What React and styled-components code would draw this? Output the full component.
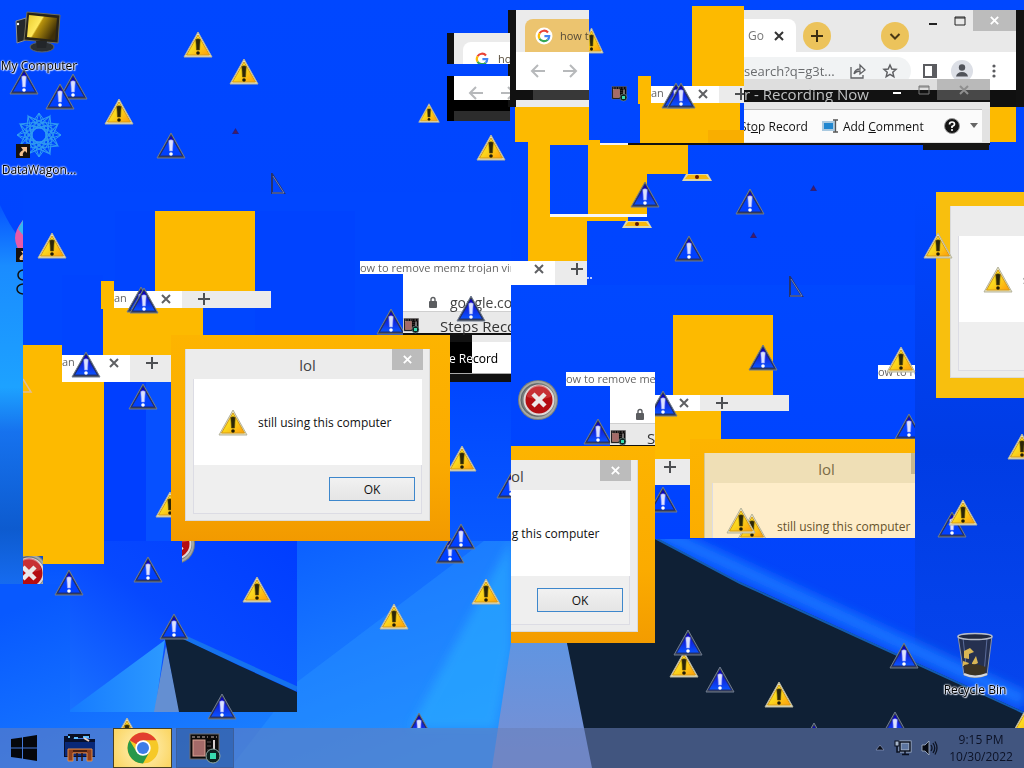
import React from "react";
import styled, { createGlobalStyle, css } from "styled-components";

const GlobalStyle = createGlobalStyle`
  * { box-sizing: border-box; }
  body { margin: 0; font-family: "Open Sans", "Noto Sans", sans-serif; font-size: 12px; color: #111; }
  button, input { font: inherit; color: inherit; border: 0; padding: 0; margin: 0; background: none; }
  svg { display: block; flex: none; }
`;

const ORANGE = "#fdba00";
const BLUE = "#0045ff";

/* ---------- layout ---------- */

const Desktop = styled.main`
  position: relative;
  display: flex;
  flex-direction: column;
  min-height: 100vh;
  overflow: hidden;
  background: ${BLUE};
`;

const WallpaperArt = styled.svg`
  position: absolute;
  inset: 0;
  width: 100%;
  height: 100%;
`;

const Canvas = styled.div`
  position: relative;
  flex: 1;
  min-height: 728px;
  overflow: hidden;
`;

const Patch = styled.div`
  position: absolute;
  left: ${(p) => p.$x}px;
  top: ${(p) => p.$y}px;
  width: ${(p) => p.$w}px;
  height: ${(p) => p.$h}px;
  background: ${(p) => p.$bg || "transparent"};
  overflow: hidden;
`;

const Spot = styled.div`
  position: absolute;
  left: ${(p) => p.$x}px;
  top: ${(p) => p.$y}px;
`;

/* ---------- wallpaper ---------- */

function Wallpaper() {
  return (
    <WallpaperArt viewBox="0 0 1024 768" preserveAspectRatio="xMidYMid slice" aria-hidden="true">
      <defs>
        <linearGradient id="sky" x1="0" y1="0" x2="0" y2="1">
          <stop offset="0" stopColor="#0047ff" />
          <stop offset=".6" stopColor="#0043ff" />
          <stop offset="1" stopColor="#0748f0" />
        </linearGradient>
        <linearGradient id="beam" gradientUnits="userSpaceOnUse" x1="300" y1="500" x2="400" y2="760">
          <stop offset="0" stopColor="#0859ff" />
          <stop offset=".5" stopColor="#1573ff" />
          <stop offset="1" stopColor="#1f8aff" />
        </linearGradient>
        <linearGradient id="edge" gradientUnits="userSpaceOnUse" x1="0" y1="205" x2="0" y2="610">
          <stop offset="0" stopColor="#0655ff" />
          <stop offset=".15" stopColor="#1a8cff" />
          <stop offset=".45" stopColor="#1da2ff" />
          <stop offset=".56" stopColor="#1672ee" />
          <stop offset=".8" stopColor="#0d5bcf" />
          <stop offset="1" stopColor="#1a73ff" />
        </linearGradient>
        <linearGradient id="haze" x1="0" y1="0" x2="0" y2="1">
          <stop offset="0" stopColor="#3f9cf5" />
          <stop offset="1" stopColor="#7a8fd2" />
        </linearGradient>
        <linearGradient id="right" x1="0" y1="0" x2="0" y2="1">
          <stop offset="0" stopColor="#0045ff" />
          <stop offset=".45" stopColor="#003ce4" />
          <stop offset="1" stopColor="#0848f0" />
        </linearGradient>
        <filter id="soft" x="-20%" y="-20%" width="140%" height="140%">
          <feGaussianBlur stdDeviation="5" />
        </filter>
      </defs>
      <rect width="1024" height="768" fill="url(#sky)" />
      <rect x="915" y="200" width="109" height="560" fill="url(#right)" />
      <path d="M0 205Q14 235 23 240V600H0Z" fill="url(#edge)" />
      <path d="M0 584H70V541H297L450 500L538 483V768H0Z" fill="url(#beam)" />
      <path d="M538 500L297 682L230 768H492L538 560Z" fill="#2a96ff" opacity=".4" />
      <path d="M511 540L511 650L495 728L410 728Z" fill="#2bb0ff" opacity=".55" filter="url(#soft)" />
      <path d="M538 483L511 643L492 768H600L567 643Z" fill="url(#haze)" />
      <path d="M538 483L655 530L1024 700" stroke="#1270ff" strokeWidth="16" fill="none" filter="url(#soft)" />
      <path d="M538 483L655 537L740 582L860 637L1024 712V768H592L567 643Z" fill="#0f2035" />
      <path d="M655 538L740 583L860 638L1024 713" stroke="#1675e8" strokeWidth="2" fill="none" opacity=".7" />
    </WallpaperArt>
  );
}

function MiniWallpaper() {
  return (
    <svg width="227" height="171" viewBox="0 0 227 171" aria-hidden="true">
      <defs>
        <linearGradient id="miniSky" x1="0" y1="1" x2="1" y2="0">
          <stop offset="0" stopColor="#1a72ff" />
          <stop offset=".5" stopColor="#0749ff" />
          <stop offset="1" stopColor="#003dff" />
        </linearGradient>
        <linearGradient id="miniBeam" x1="0" y1="0" x2="1" y2="0">
          <stop offset="0" stopColor="#167bff" />
          <stop offset="1" stopColor="#2c99ff" />
        </linearGradient>
      </defs>
      <rect width="227" height="171" fill="url(#miniSky)" />
      <path d="M95 99L0 169V171H85Z" fill="url(#miniBeam)" />
      <path d="M96 105L84 171H110Z" fill="#648fd2" />
      <path d="M113 96L227 148" stroke="#1572ee" strokeWidth="5" />
      <path d="M95 98L113 98L170 125L227 151V171H109Z" fill="#0f2238" />
    </svg>
  );
}

/* ---------- icons ---------- */

function WarningIcon({ kind = "yellow", width = 30, height = 27 }) {
  const yellow = kind === "yellow";
  const glass = kind === "blue";
  return (
    <svg width={width} height={height} viewBox="0 0 30 27" preserveAspectRatio="none" aria-hidden="true">
      <defs>
        <linearGradient id="warnFill" x1="0" y1="0" x2="1" y2="1">
          <stop offset="0" stopColor="#fff22a" />
          <stop offset=".5" stopColor="#fbd51c" />
          <stop offset="1" stopColor="#ff9c08" />
        </linearGradient>
        <linearGradient id="warnBlue" x1="0" y1="0" x2="0" y2="1">
          <stop offset="0" stopColor="#0a00c8" />
          <stop offset=".5" stopColor="#1028e0" />
          <stop offset="1" stopColor="#0a55ff" />
        </linearGradient>
      </defs>
      <path
        d="M15 1L29 26H1Z"
        fill={yellow ? "#e8e2bc" : "#3c424c"}
        stroke={yellow ? "#b5b39c" : "#6f7b90"}
        strokeWidth="1"
        strokeLinejoin="round"
      />
      <path
        d="M15 4L26.500 24H3.500Z"
        fill={yellow ? "url(#warnFill)" : glass ? "url(#warnBlue)" : "#0040ff"}
        stroke={yellow ? "#d59a18" : "#1c2c78"}
        strokeWidth="1"
      />
      {!yellow && <path d="M15 4L18 9.500H12Z" fill="#0a00c0" />}
      <path d="M12.800 8.500Q15 7 17.200 8.500L16.500 19H13.500Z" fill={yellow ? "#2b2608" : "#dce2ff"} stroke={yellow ? "#5a4c0a" : "#8f9aff"} strokeWidth=".6" />
      <circle cx="15" cy="22" r="1.800" fill={yellow ? "#201c08" : "#fff"} />
    </svg>
  );
}

function ErrorIcon() {
  return (
    <svg width="42" height="42" viewBox="0 0 42 42" aria-hidden="true">
      <circle cx="21" cy="21" r="20" fill="#777d7d" />
      <circle cx="21" cy="21" r="18" fill="none" stroke="#a6a9a4" strokeWidth="2" />
      <circle cx="20" cy="21" r="16" fill="none" stroke="#5c6268" strokeWidth="1" />
      <circle cx="22" cy="21" r="14.500" fill="#b40d12" stroke="#ded8d8" strokeWidth="2" />
      <path d="M10 18A12 12 0 0 1 34 18Q22 22 10 18Z" fill="#d4474c" opacity=".6" />
      <path d="M16 15L28 27M28 15L16 27" stroke="#ece9e9" strokeWidth="4.500" />
    </svg>
  );
}

function Glyph({ d, size = 12, color = "#4d4f52", weight = 2, fill = "none" }) {
  return (
    <svg width={size} height={size} viewBox="0 0 12 12" aria-hidden="true">
      <path d={d} fill={fill} stroke={color} strokeWidth={weight} />
    </svg>
  );
}
const CROSS = "M2 2L10 10M10 2L2 10";
const PLUS = "M6 0V12M0 6H12";

function GoogleIcon() {
  return (
    <svg width="20" height="20" viewBox="0 0 20 20" aria-hidden="true">
      <circle cx="10" cy="10" r="8.500" fill="#fff" />
      <g fill="none" strokeWidth="2.200">
        <path d="M14 6.500A5.200 5.200 0 0 0 5.600 7.300" stroke="#ea4335" />
        <path d="M5.600 7.300A5.200 5.200 0 0 0 5.600 12.700" stroke="#fbbc05" />
        <path d="M5.600 12.700A5.200 5.200 0 0 0 13.700 13.700" stroke="#34a853" />
        <path d="M13.700 13.700A5.200 5.200 0 0 0 15.200 10.200H10.400" stroke="#4285f4" />
      </g>
    </svg>
  );
}

function RecorderIcon({ size = 17 }) {
  return (
    <svg width={size} height={size} viewBox="0 0 34 34" aria-hidden="true">
      <rect x="2" y="3" width="29" height="25" fill="#0c0a0a" stroke="#6f6a6c" />
      <path d="M4 6H20M23 6H29" stroke="#cbb7b4" strokeWidth="1.200" strokeDasharray="3 2" />
      <rect x="5" y="9" width="12" height="16" fill="#a56a68" stroke="#dba394" />
      <path d="M19 11H23M19 15H23M19 19H22" stroke="#5c5352" />
      <path d="M26 9V18" stroke="#d8cfcf" strokeWidth="2" />
      <circle cx="25" cy="25" r="7" fill="#0e2320" stroke="#8fa7a3" />
      <rect x="22" y="22" width="6" height="6" fill="#38dcae" />
    </svg>
  );
}

function Lock() {
  return (
    <svg width="10" height="13" viewBox="0 0 10 13" aria-hidden="true">
      <rect x="1" y="5" width="8" height="7" rx="1" fill="#5b5d60" />
      <path d="M3 6V3.500A2 2 0 0 1 7 3.500V6" fill="none" stroke="#5b5d60" strokeWidth="1.400" />
    </svg>
  );
}

function Arrow({ back }) {
  return (
    <svg width="16" height="16" viewBox="0 0 16 16" aria-hidden="true">
      <path d={back ? "M15 8H2M8 2L2 8L8 14" : "M1 8H14M8 2L14 8L8 14"} fill="none" stroke="#b7b9bb" strokeWidth="2" />
    </svg>
  );
}

/* ---------- message box ---------- */

const Frame = styled.section`
  width: 279px;
  height: 206px;
  padding: 14px 20px 20px 14px;
  background: ${(p) => p.$frame || "linear-gradient(#fdb400, #fbab00 60%, #f29a00)"};
  ${(p) =>
    p.$left &&
    css`
      margin-left: -${p.$left}px;
    `}
`;
const FrameInner = styled.div`
  height: 172px;
  padding: 0 7px 7px;
  background: ${(p) => (p.$tint ? "#efdfb6" : "#ececec")};
  border: 1px solid ${(p) => (p.$tint ? "#d7c690" : "#dadada")};
  border-top: 0;
  position: relative;
`;
const TitleRow = styled.header`
  display: flex;
  justify-content: center;
  height: 30px;
  line-height: 32px;
  font-size: 15px;
  color: ${(p) => (p.$tint ? "#7c6c45" : "#444")};
`;
const CloseBox = styled.button`
  position: absolute;
  right: 6px;
  top: 0;
  width: 31px;
  height: 21px;
  display: grid;
  place-items: center;
  background: ${(p) => (p.$tint ? "#c6b78e" : "#bcbcbc")};
`;
const MessageBody = styled.div`
  display: flex;
  align-items: center;
  gap: 10px;
  height: 86px;
  padding-left: 24px;
  border-left: 1px solid #dcdce4;
  white-space: nowrap;
  font-size: 12px;
  color: ${(p) => (p.$tint ? "#66532c" : "#111")};
  background: ${(p) => (p.$tint ? "#feedc9" : "#fff")};
`;
const MessageFooter = styled.footer`
  display: flex;
  justify-content: flex-end;
  align-items: flex-start;
  height: 49px;
  padding: 12px 6px;
  background: #efefef;
  border: 1px solid #dcdce4;
  border-top: 0;
`;
const OkButton = styled.button`
  width: 86px;
  height: 24px;
  border: 1px solid #3d87cc;
  background: linear-gradient(#f1f1f1, #e5e5e5);
`;

function MessageBox({ left, frame, tint }) {
  return (
    <Frame $left={left} $frame={frame} aria-label="lol">
      <FrameInner $tint={tint}>
        <TitleRow $tint={tint}>lol</TitleRow>
        <CloseBox $tint={tint} aria-label="Close">
          <Glyph d={CROSS} size={11} color="#fff" />
        </CloseBox>
        <MessageBody $tint={tint}>
          <WarningIcon />
          <span>still using this computer</span>
        </MessageBody>
        <MessageFooter>
          <OkButton>OK</OkButton>
        </MessageFooter>
      </FrameInner>
    </Frame>
  );
}

/* ---------- browser tab strips ---------- */

const Strip = styled.div`
  display: flex;
  align-items: flex-start;
  height: 100%;
  background: #ebebeb;
  ${(p) =>
    p.$shift &&
    css`
      margin-left: -${p.$shift}px;
    `}
`;
const TabPart = styled.div`
  display: flex;
  justify-content: space-between;
  align-items: flex-start;
  flex: none;
  width: ${(p) => p.$w}px;
  height: 100%;
  padding-right: 9px;
  background: #fff;
  color: #666;
  font-size: 11px;
  line-height: 14px;
  white-space: nowrap;
`;
const TabText = styled.span`
  flex: 1;
  overflow: hidden;
  mask-image: ${(p) => (p.$fade ? "linear-gradient(90deg, #000 85%, transparent)" : "none")};
`;
const StripButton = styled.button`
  flex: none;
  display: grid;
  place-items: center;
  width: 14px;
  height: 15px;
  margin-left: ${(p) => p.$gap || 0}px;
`;

function TabStrip({ title, width = 68, shift, fade }) {
  return (
    <Strip $shift={shift}>
      <TabPart $w={width}>
        <TabText $fade={fade}>{title}</TabText>
        <StripButton aria-label="Close tab">
          <Glyph d={CROSS} color="#5f6063" />
        </StripButton>
      </TabPart>
      <StripButton $gap={15} aria-label="New tab">
        <Glyph d={PLUS} />
      </StripButton>
    </Strip>
  );
}

/* ---------- browser pieces ---------- */

const BrowserLeft = styled.div`
  display: flex;
  flex-direction: column;
  height: 100%;
  background: #ebebeb;
`;
const LeftTab = styled.div`
  display: flex;
  align-items: center;
  gap: 6px;
  height: ${(p) => p.$h}px;
  margin: 9px 0 0 ${(p) => p.$inset}px;
  padding-left: 9px;
  border-top-left-radius: 8px;
  background: ${(p) => p.$bg};
  color: #554a38;
  font-size: 11px;
  white-space: nowrap;
  flex: none;
`;
const NavRow = styled.div`
  display: flex;
  align-items: center;
  gap: 16px;
  height: ${(p) => p.$h}px;
  padding-left: 14px;
  background: #fff;
  overflow: hidden;
`;

const HeaderRow = styled.div`
  display: flex;
  align-items: flex-start;
  height: 42px;
  background: #e9e9e9;
`;
const ActiveTab = styled.div`
  display: flex;
  align-items: center;
  justify-content: space-between;
  width: 52px;
  height: 33px;
  margin-top: 9px;
  padding: 0 10px 0 4px;
  border-top-right-radius: 8px;
  background: #fff;
  color: #777;
`;
const RoundButton = styled.button`
  width: 28px;
  height: 28px;
  margin: 12px 0 0 ${(p) => p.$gap}px;
  border-radius: 50%;
  background: #ecc35b;
  display: grid;
  place-items: center;
`;
const WindowButtons = styled.div`
  display: flex;
  margin-left: auto;
`;
const WindowButton = styled.button`
  display: grid;
  place-items: center;
  width: ${(p) => p.$w || 27}px;
  height: 21px;
  background: ${(p) => p.$bg || "transparent"};
`;
const ToolRow = styled.div`
  display: flex;
  align-items: center;
  height: 38px;
  background: #fff;
`;
const AddressBar = styled.label`
  display: flex;
  align-items: center;
  gap: 16px;
  width: 167px;
  height: 28px;
  border-radius: 0 14px 14px 0;
  background: #f1f3f4;
`;
const AddressInput = styled.input`
  width: 94px;
  margin-right: -4px;
  font-size: 13px;
  color: #6a6c6e;
  outline: 0;
`;
const ToolIcons = styled.div`
  display: flex;
  align-items: center;
  gap: 14px;
  padding-left: 12px;
`;
const IconButton = styled.button`
  display: grid;
  place-items: center;
`;

function BrowserRight() {
  return (
    <>
      <HeaderRow>
        <ActiveTab>
          <TabText $fade>Go</TabText>
          <StripButton aria-label="Close tab"><Glyph d={CROSS} color="#333" /></StripButton>
        </ActiveTab>
        <RoundButton $gap={7} aria-label="New tab"><Glyph d={PLUS} color="#3c2e12" /></RoundButton>
        <RoundButton $gap={50} aria-label="Search tabs"><Glyph d="M1.500 4L6 8.500L10.500 4" color="#4a3814" /></RoundButton>
        <WindowButtons>
          <WindowButton aria-label="Minimize"><Glyph d="M2 9H10" color="#222" /></WindowButton>
          <WindowButton aria-label="Maximize"><Glyph d="M1 2H11V10H1ZM1 3H11" color="#222" weight={1} /></WindowButton>
          <WindowButton $w={43} $bg="#bcbcbc" aria-label="Close"><Glyph d={CROSS} size={11} color="#fff" /></WindowButton>
        </WindowButtons>
      </HeaderRow>
      <ToolRow>
        <AddressBar>
          <AddressInput aria-label="Address" readOnly value="search?q=g3t..." />
          <IconButton aria-label="Share">
            <svg width="16" height="16" viewBox="0 0 16 16" fill="none" stroke="#5f6063" strokeWidth="1.300">
              <path d="M1 4V15H13V12M4 11Q5 6 10 6V2L15 7L10 11V8Q6 8 4 11Z" />
            </svg>
          </IconButton>
          <IconButton aria-label="Bookmark">
            <svg width="16" height="16" viewBox="0 0 16 16" fill="none" stroke="#5f6063" strokeWidth="1.500">
              <path d="M8 2L9.800 6L14 6.400L10.800 9.300L11.800 13.600L8 11.300L4.200 13.600L5.200 9.300L2 6.400L6.200 6Z" />
            </svg>
          </IconButton>
        </AddressBar>
        <ToolIcons>
          <IconButton aria-label="Side panel">
            <svg width="14" height="14" viewBox="0 0 14 14"><path d="M1 1H13V13H1Z" fill="#fff" stroke="#5b5c60" strokeWidth="2" /><path d="M9 1H13V13H9Z" fill="#5b5c60" /></svg>
          </IconButton>
          <IconButton aria-label="Profile">
            <svg width="22" height="22" viewBox="0 0 22 22"><circle cx="11" cy="11" r="11" fill="#dcdfe6" /><circle cx="11" cy="7.500" r="3.200" fill="#50535a" /><path d="M5 16.500Q6 12 11 12T17 16.500Z" fill="#50535a" /></svg>
          </IconButton>
          <IconButton aria-label="Menu">
            <svg width="14" height="14" viewBox="0 0 14 14" fill="#5b5c60"><circle cx="7" cy="2" r="1.600" /><circle cx="7" cy="7" r="1.600" /><circle cx="7" cy="12" r="1.600" /></svg>
          </IconButton>
        </ToolIcons>
      </ToolRow>
    </>
  );
}

const RecorderTitle = styled.div`
  display: flex;
  align-items: flex-start;
  height: 23px;
  overflow: hidden;
  white-space: nowrap;
  font-size: 15px;
  line-height: 30px;
  color: #bfc1c2;
  background: linear-gradient(#dedede 11px, #121212 11px);
`;
const RecorderTools = styled.div`
  display: flex;
  align-items: center;
  height: 33px;
  width: 238px;
  border-top: 1px solid #bdbdbd;
  background: #fbfbfb;
  overflow: hidden;
  white-space: nowrap;
`;
const ToolButton = styled.button`
  display: flex;
  align-items: center;
  gap: 4px;
  flex: none;
  margin-left: ${(p) => p.$gap || 0}px;
`;

function RecorderBar() {
  return (
    <>
      <RecorderTitle>
        r - Recording Now
        <WindowButtons>
          <WindowButton aria-label="Minimize"><Glyph d="M2 9H10" color="#fff" /></WindowButton>
          <WindowButton aria-label="Maximize"><Glyph d="M1 2H11V10H1ZM1 3H11" color="#777" weight={1} /></WindowButton>
          <WindowButton $w={53} $bg="rgba(140,140,140,.45)" aria-label="Close"><Glyph d={CROSS} color="#8f8f8f" /></WindowButton>
        </WindowButtons>
      </RecorderTitle>
      <Patch $x={0} $y={23} $w={246} $h={7} $bg="#e6e6e6" />
    </>
  );
}

const PartialPage = styled.div`
  display: flex;
  align-items: center;
  gap: 12px;
  height: 37px;
  padding: 20px 0 0 25px;
  background: #fff;
`;
const PartialAddress = styled.span`
  font-size: 14px;
  color: #444;
  line-height: 20px;
`;
const PartialTitle = styled.div`
  display: flex;
  align-items: center;
  gap: 20px;
  height: 24px;
  padding-top: 6px;
  border-top: 1px solid #cfcfcf;
  border-bottom: 2px solid #111;
  background: #e9e9e9;
  font-size: 15px;
  color: #333;
  white-space: nowrap;
`;
const RecordText = styled.div`
  height: 31px;
  line-height: 33px;
  margin-left: -1px;
  background: linear-gradient(90deg, #000 23px, #fff 23px);
`;
const RecordLabel = styled.span`
  color: #fff;
  mix-blend-mode: difference;
`;

/* ---------- desktop shortcuts ---------- */

const Shortcut = styled.button`
  position: absolute;
  top: ${(p) => p.$y}px;
  ${(p) => (p.$right !== undefined ? `right: ${p.$right}px;` : `left: ${p.$x}px;`)}
  display: flex;
  flex-direction: column;
  align-items: center;
  width: 78px;
  color: #000;
  white-space: nowrap;
  line-height: 14px;
  text-shadow: 0 0 2px #fff, 0 0 2px #fff, 1px 1px 1px #dce6ff, -1px 0 1px #dce6ff;
`;

function ComputerIcon() {
  return (
    <svg width="48" height="49" viewBox="0 0 48 49" aria-hidden="true">
      <defs>
        <linearGradient id="screen" x1="0" y1="0" x2="1" y2=".5">
          <stop offset="0" stopColor="#e8c92c" /><stop offset=".45" stopColor="#ffe95c" />
          <stop offset=".5" stopColor="#b8920c" /><stop offset="1" stopColor="#3e2f08" />
        </linearGradient>
      </defs>
      <path d="M1 11L11 8V30L2 33Z" fill="#24282c" stroke="#8c9096" />
      <circle cx="3" cy="14" r="1.200" fill="#fff" />
      <path d="M12 2L45 5L43 33L9 30Z" fill="#26231a" stroke="#6f6c58" />
      <path d="M14 5L42 8L40 30L12 27Z" fill="url(#screen)" />
      <ellipse cx="27" cy="37" rx="12" ry="5" fill="#2c3034" stroke="#5c646c" />
      <path d="M21 31H32L31 38H22Z" fill="#23262a" />
    </svg>
  );
}

function ShortcutArrow({ x, y }) {
  return (
    <g transform={`translate(${x} ${y})`}>
      <rect width="14" height="14" fill="#15110f" />
      <path d="M4 12Q2 9 7 6L5 3H11V9L9 7Q6 9 7 12Z" fill="#f2bf8e" />
    </g>
  );
}

function WagonIcon() {
  return (
    <svg width="48" height="50" viewBox="0 0 48 50" aria-hidden="true">
      <g fill="none" stroke="#2f9bf2" strokeWidth="1">
        {[0, 30, 60, 90, 120, 150].map((a) => (
          <path key={a} transform={`rotate(${a} 24 22)`} d="M24 0L34 14L24 44L14 14ZM24 44L34 30L24 0L14 30Z" />
        ))}
      </g>
      <ShortcutArrow x={1} y={31} />
    </svg>
  );
}

function BinIcon() {
  return (
    <svg width="40" height="51" viewBox="0 0 40 51" aria-hidden="true">
      <path d="M3 4L37 4L32 43Q20 48 9 43Z" fill="#253050" stroke="#8c93a5" />
      <path d="M8 6L12 42M32 6L29 42" stroke="#5a6b99" />
      <ellipse cx="20" cy="4.500" rx="17" ry="3" fill="#20283e" stroke="#b7bcc8" strokeWidth="1.500" />
      <path d="M9 19L15 16L19 20L14 22V27L9 26ZM17 31L21 24L23 31L17 34ZM8 29L14 31L12 34H8Z" fill="#d9b654" />
      <path d="M9 33Q20 30 31 35L30 42Q20 45 10 42Z" fill="#3b3324" />
      <path d="M9 42Q20 47 32 42" stroke="#d5d8de" strokeWidth="2" fill="none" />
    </svg>
  );
}

/* ---------- taskbar ---------- */

const Taskbar = styled.nav`
  position: relative;
  display: flex;
  align-items: stretch;
  height: 40px;
  background: rgba(106, 127, 185, 0.56);
`;
const TaskButton = styled.button`
  display: grid;
  place-items: center;
  width: ${(p) => p.$w}px;
  margin-right: ${(p) => p.$after || 0}px;
  ${(p) => p.$state === "active" && "background: radial-gradient(circle, #fff3c0, #fbd768 90%); border: 1px solid #4a4020;"}
  ${(p) => p.$state === "open" && "background: rgba(40,90,165,.6); border: 1px solid #3c5f9c;"}
`;
const Tray = styled.div`
  display: flex;
  align-items: center;
  gap: 9px;
  margin-left: auto;
  padding-right: 13px;
`;
const Clock = styled.time`
  display: flex;
  flex-direction: column;
  align-items: center;
  width: 60px;
  margin-left: 4px;
  white-space: nowrap;
  line-height: 17px;
  color: #0c1226;
`;

function TaskbarRow() {
  return (
    <Taskbar aria-label="Taskbar">
      <TaskButton $w={48} aria-label="Start">
        <svg width="26" height="26" viewBox="0 0 26 26" fill="#05070c"><path d="M0 4L11 2.500V12.500H0ZM12 2.300L26 0V12.500H12ZM0 13.500H11V23.500L0 22ZM12 13.500H26V26L12 23.700Z" /></svg>
      </TaskButton>
      <TaskButton $w={64} $after={1} aria-label="File Explorer">
        <svg width="34" height="30" viewBox="0 0 34 30">
          <path d="M1 3H9L11 6H32V24H1Z" fill="#07102c" />
          <path d="M5 3H27" stroke="#0b0f22" strokeWidth="4" />
          <path d="M5 4H7M11 5H15M20 4H26" stroke="#62c0ff" strokeWidth="2" />
          <path d="M21 5L26 8" stroke="#f0d3c4" strokeWidth="2" />
          <path d="M2 9H32V23H2Z" fill="#082878" />
          <path d="M5 16H29V28H24V20H10V28H5Z" fill="#8d3f1d" stroke="#e28a45" />
          <path d="M10 18H24M14 20V28M19 20V28" stroke="#30150e" strokeWidth="1.500" />
        </svg>
      </TaskButton>
      <TaskButton $w={59} $after={4} $state="active" aria-label="Google Chrome">
        <svg width="32" height="32" viewBox="0 0 32 32">
          <circle cx="16" cy="16" r="15.500" fill="#f6c927" />
          <path d="M16 16L2.600 8.300A15.500 15.500 0 0 1 29.400 8.300H16Z" fill="#e2402f" />
          <path d="M2.600 8.300A15.500 15.500 0 0 0 16 31.500L22.500 19.800L9.500 19.700Z" fill="#28984a" />
          <circle cx="16" cy="16" r="7.700" fill="#fff" />
          <circle cx="16" cy="16" r="6" fill="#3d7de8" />
        </svg>
      </TaskButton>
      <TaskButton $w={58} $state="open" aria-label="Steps Recorder"><RecorderIcon size={34} /></TaskButton>
      <Tray>
        <svg width="10" height="8" viewBox="0 0 10 8" aria-hidden="true"><path d="M5 1L9 6H1Z" fill="#0a0e18" stroke="#95a3c8" strokeWidth=".6" /></svg>
        <svg width="18" height="16" viewBox="0 0 18 16" aria-hidden="true">
          <path d="M6 2H16V11H6Z" fill="#5c759f" stroke="#a9b8cc" strokeWidth="3" />
          <path d="M6 2H16V11H6ZM11 11V14M8 14.500H15M3 6V12H6" fill="none" stroke="#0a1020" strokeWidth="1.500" />
          <rect x="1" y="1" width="4" height="5" fill="#a9b8cc" stroke="#0a1020" />
        </svg>
        <svg width="17" height="16" viewBox="0 0 17 16" aria-hidden="true">
          <path d="M1 5H4L8 1V15L4 11H1Z" fill="#070a12" stroke="#a9b8cc" strokeWidth=".8" />
          <path d="M10 5Q12 8 10 11M12 3Q15.500 8 12 13M14 1.500Q18 8 14 14.500" fill="none" stroke="#0d1424" strokeWidth="1.300" />
        </svg>
        <Clock>
          <span>9:15 PM</span>
          <span>10/30/2022</span>
        </Clock>
      </Tray>
    </Taskbar>
  );
}

/* ---------- scattered content ---------- */

const shades = [
  [23, 192, 488, 349, "linear-gradient(#0046ff 55%, #0859ff)"],
  [23, 541, 159, 43, "linear-gradient(#0050ff, #0a5aff)"],
  [104, 382, 42, 159, "#003fff"],
  [146, 382, 36, 190, "#0650ff"],
  [62, 275, 41, 80, "#0044ff"],
  [255, 211, 100, 124, "#0043ff"],
  [115, 211, 40, 80, "#0044ff"],
  [511, 285, 404, 254, "linear-gradient(#0048ff, #0042ff)"],
];

const patches = [
  [447, 33, 7, 31, "#111"],
  [447, 76, 63, 45, "#000"],
  [454, 111, 56, 10, "#2c2c2c"],
  [508, 10, 8, 97, "#111"],
  [515, 107, 74, 35, ORANGE],
  [528, 142, 61, 3, ORANGE],
  [589, 140, 11, 5, ORANGE],
  [528, 145, 22, 116, ORANGE],
  [588, 145, 100, 29, ORANGE],
  [588, 174, 59, 40, ORANGE],
  [550, 217, 78, 4, ORANGE],
  [550, 221, 37, 40, ORANGE],
  [550, 214, 97, 3, "#f7f7f7"],
  [600, 143, 28, 2, "#f2f2f2"],
  [628, 143, 362, 2, "#111"],
  [923, 143, 66, 7, "#161616"],
  [638, 76, 13, 28, ORANGE],
  [692, 6, 52, 137, ORANGE],
  [640, 103, 103, 40, ORANGE],
  [708, 130, 36, 13, "#f9ae00"],
  [740, 103, 4, 27, BLUE],
  [155, 211, 100, 80, ORANGE],
  [101, 281, 13, 28, ORANGE],
  [103, 307, 100, 48, ORANGE],
  [23, 345, 39, 37, ORANGE],
  [23, 382, 81, 182, ORANGE],
  [673, 315, 100, 80, ORANGE],
  [655, 411, 66, 48, ORANGE],
  [990, 107, 26, 35, ORANGE],
];

const marks = [
  [183, 31, "yellow"], [229, 58, "yellow"], [104, 98, "yellow"], [476, 134, "yellow"],
  [37, 232, "yellow"], [447, 445, "yellow"], [242, 576, "yellow"], [379, 603, "yellow"],
  [471, 578, "yellow"], [1007, 433, "yellow"], [669, 651, "yellow"], [764, 681, "yellow"],
  [1012, 706, "yellow"], [112, 717, "yellow"], [155, 491, "yellow"],
  [9, 68, "clear"], [58, 73, "clear"], [45, 83, "clear"], [156, 132, "clear"],
  [735, 188, "clear"], [630, 181, "blue"], [674, 235, "clear"], [128, 383, "clear"],
  [133, 556, "clear"], [54, 569, "clear"], [159, 613, "clear"], [207, 693, "blue"],
  [404, 712, "blue"], [376, 308, "blue"], [583, 418, "blue"], [648, 486, "clear"],
  [496, 472, "clear"], [748, 344, "blue"], [937, 511, "clear"], [948, 499, "yellow"],
  [435, 537, "clear"], [446, 523, "clear"], [673, 629, "blue"], [705, 666, "blue"],
  [889, 642, "blue"], [880, 711, "blue"], [799, 722, "blue"],
];

const topMarks = [
  [661, 82, "blue"], [666, 82, "blue"], [126, 286, "blue"], [129, 287, "blue"],
  [71, 351, "blue"], [456, 295, "blue"], [923, 232, "yellow"], [726, 507, "yellow"],
  [886, 346, "yellow"],
];

const specks = [[232, 128], [810, 185], [750, 232]];
const slivers = [[270, 173], [788, 276]];

function Speck() {
  return <svg width="7" height="6" viewBox="0 0 7 6" aria-hidden="true"><path d="M3.500 0L7 6H0Z" fill="#2a1f80" /><circle cx="3.500" cy="4" r="1" fill="#611a4a" /></svg>;
}
function Sliver() {
  return <svg width="16" height="22" viewBox="0 0 16 22" aria-hidden="true"><path d="M2 1L14 20H2Z" fill="none" stroke="#26336e" strokeWidth="2" /><path d="M3 3L14 20H2" fill="none" stroke="#8b9fd0" strokeWidth=".7" /></svg>;
}
function FlatWarning() {
  return <svg width="30" height="8" viewBox="0 0 30 8" aria-hidden="true"><path d="M4 0H26L30 7H0Z" fill="#ddd6a8" /><path d="M6 1H24L27 5H3Z" fill="#f7b80e" /><circle cx="15" cy="3" r="2" fill="#5a1608" /></svg>;
}

export default function App() {
  return (
    <>
      <GlobalStyle />
      <Desktop>
        <Wallpaper />
        <Canvas>
          <Shortcut $x={0} $y={10}><ComputerIcon />My Computer</Shortcut>
          <Shortcut $x={0} $y={113}><WagonIcon />DataWagon...</Shortcut>
          <Patch $x={15} $y={220} $w={8} $h={76}>
            <svg width="8" height="76" viewBox="0 0 8 76" aria-hidden="true">
              <path d="M8 0Q0 10 0 18T8 36Z" fill="#e85aa8" /><path d="M8 0L3 9L8 15Z" fill="#35b7f0" />
              <ShortcutArrow x={1} y={28} />
              <path d="M8 50Q3 51 3 55T8 60M8 64Q2 65 2 69T8 74" fill="none" stroke="#111" strokeWidth="1.500" />
            </svg>
          </Patch>
          <Shortcut $right={10} $y={632}><BinIcon /><span>Recycle Bin</span></Shortcut>

          {shades.map(([x, y, w, h, bg]) => <Patch key={`${x}-${y}`} $x={x} $y={y} $w={w} $h={h} $bg={bg} />)}
          <Patch $x={70} $y={541} $w={227} $h={171}><MiniWallpaper /></Patch>
          {patches.map(([x, y, w, h, bg]) => <Patch key={`${x}-${y}`} $x={x} $y={y} $w={w} $h={h} $bg={bg} />)}

          {marks.map(([x, y, kind]) => <Spot key={`${x}-${y}`} $x={x} $y={y}><WarningIcon kind={kind} /></Spot>)}
          <Spot $x={418} $y={103}><WarningIcon width={22} height={20} /></Spot>
          {specks.map(([x, y]) => <Spot key={x} $x={x} $y={y}><Speck /></Spot>)}
          {slivers.map(([x, y]) => <Spot key={x} $x={x} $y={y}><Sliver /></Spot>)}
          <Spot $x={682} $y={174}><FlatWarning /></Spot>
          <Spot $x={622} $y={221}><FlatWarning /></Spot>
          <Spot $x={23} $y={378}>
            <svg width="10" height="15" viewBox="0 0 10 15" aria-hidden="true"><path d="M0 1L8 14H0" fill="none" stroke="#e3bd92" strokeWidth="1.500" /></svg>
          </Spot>
          <Spot $x={517} $y={379}><ErrorIcon /></Spot>
          <Patch $x={23} $y={556} $w={20} $h={28} $bg="#0c4fd0">
            <Spot $x={-16} $y={-4}><ErrorIcon /></Spot>
          </Patch>
          <Patch $x={182} $y={541} $w={14} $h={24}>
            <Spot $x={-28} $y={-18}><ErrorIcon /></Spot>
          </Patch>
          <Patch $x={894} $y={413} $w={21} $h={27}><WarningIcon kind="clear" /></Patch>

          <Patch $x={454} $y={33} $w={56} $h={31}>
            <BrowserLeft>
              <LeftTab $inset={9} $h={33} $bg="#fff"><GoogleIcon />how</LeftTab>
            </BrowserLeft>
          </Patch>
          <Patch $x={454} $y={76} $w={56} $h={24}>
            <NavRow $h={33}><Arrow back /><Arrow /></NavRow>
          </Patch>
          <Spot $x={579} $y={27}><WarningIcon width={25} /></Spot>
          <Patch $x={516} $y={10} $w={73} $h={97}>
            <BrowserLeft>
              <LeftTab $inset={9} $h={33} $bg="#ecc46f"><GoogleIcon />how to</LeftTab>
              <NavRow $h={38}><Arrow back /><Arrow /></NavRow>
              <Patch $x={0} $y={80} $w={73} $h={10} $bg="linear-gradient(90deg, #111 17px, #383838 17px)" />
            </BrowserLeft>
          </Patch>

          <Patch $x={744} $y={10} $w={272} $h={97} $bg="#101010"><BrowserRight /></Patch>
          <Patch $x={1016} $y={10} $w={8} $h={97} $bg="#121212" />
          <Patch $x={744} $y={79} $w={246} $h={64} $bg="#e2e2e2">
            <RecorderBar />
            <Patch $x={0} $y={30} $w={238} $h={34}>
              <RecorderTools>
                <ToolButton $gap={-4}><span>St<u>o</u>p Record</span></ToolButton>
                <ToolButton $gap={14}>
                  <svg width="17" height="14" viewBox="0 0 17 14" aria-hidden="true">
                    <path d="M1 3H12V11H1Z" fill="#2187d0" stroke="#a9c9e0" strokeWidth="2" /><path d="M11 1H16M13.500 1V13M11 13H16" stroke="#555" strokeWidth="1.300" />
                  </svg>
                  <span>Add <u>C</u>omment</span>
                </ToolButton>
                <ToolButton $gap={20} aria-label="Help">
                  <svg width="16" height="16" viewBox="0 0 16 16"><circle cx="8" cy="8" r="7.500" fill="#151515" stroke="#999" /><path d="M5.500 6.500Q5.500 4 8 4T10.500 6.200Q10.500 7.500 8 8.500V10" fill="none" stroke="#fff" strokeWidth="1.700" /><circle cx="8" cy="12" r="1" fill="#fff" /></svg>
                  <svg width="20" height="8" viewBox="0 0 20 8"><path d="M6 1H14L10 6Z" fill="#666" /></svg>
                </ToolButton>
              </RecorderTools>
            </Patch>
          </Patch>

          <Spot $x={611} $y={85}><RecorderIcon /></Spot>
          <Patch $x={651} $y={86} $w={93} $h={17}><TabStrip title="an" /></Patch>
          <Patch $x={114} $y={291} $w={157} $h={17}><TabStrip title="an" /></Patch>
          <Patch $x={62} $y={355} $w={109} $h={27}><TabStrip title="an" /></Patch>
          <Patch $x={655} $y={395} $w={134} $h={16}><TabStrip title="" shift={23} /></Patch>
          <Patch $x={655} $y={459} $w={35} $h={26}><TabStrip title="" shift={75} /></Patch>
          <Patch $x={655} $y={390} $w={24} $h={27}><Spot $x={-7} $y={0}><WarningIcon kind="blue" /></Spot></Patch>

          <Patch $x={403} $y={274} $w={108} $h={61} $bg="#fff">
            <PartialPage><Lock /><PartialAddress>google.com</PartialAddress></PartialPage>
            <PartialTitle><RecorderIcon />Steps Recorder</PartialTitle>
          </Patch>
          <Patch $x={450} $y={335} $w={61} $h={47} $bg="#111">
            <Patch $x={0} $y={0} $w={61} $h={7} $bg="linear-gradient(90deg, #111 22px, #e9e9e9 22px)" />
            <Patch $x={0} $y={7} $w={61} $h={32} $bg="#aaa">
              <RecordText><RecordLabel>e Record</RecordLabel></RecordText>
            </Patch>
          </Patch>
          <Patch $x={503} $y={338} $w={8} $h={13}><WarningIcon /></Patch>
          <Patch $x={360} $y={261} $w={227} $h={13}><TabStrip title="ow to remove memz trojan virus" width={195} fade /></Patch>
          <Patch $x={511} $y={274} $w={76} $h={11} $bg="linear-gradient(90deg, #fff 44px, #ebebeb 44px)" />
          <Patch $x={511} $y={261} $w={76} $h={24}><TabStrip title="" width={44} /></Patch>
          <Patch $x={587} $y={274} $w={6} $h={6}>
            <svg width="6" height="6" viewBox="0 0 6 6" aria-hidden="true"><path d="M0 4H2M3 4H5" stroke="#b8c8ff" strokeWidth="2" /></svg>
          </Patch>

          <Patch $x={566} $y={372} $w={89} $h={14}><TabStrip title="ow to remove memz" width={195} /></Patch>
          <Patch $x={610} $y={386} $w={45} $h={60} $bg="#fff">
            <PartialPage><Lock /></PartialPage>
            <PartialTitle><RecorderIcon />Steps</PartialTitle>
          </Patch>
          <Patch $x={878} $y={365} $w={37} $h={14}><TabStrip title="ow to remove" width={195} /></Patch>

          <Patch $x={936} $y={192} $w={88} $h={206}><MessageBox frame="#f8bf0e" /></Patch>
          <Patch $x={511} $y={446} $w={144} $h={197}><MessageBox left={132} /></Patch>
          <Patch $x={690} $y={439} $w={225} $h={99}><MessageBox tint /></Patch>
          <Patch $x={171} $y={335} $w={279} $h={206}><MessageBox /></Patch>

          {topMarks.map(([x, y, kind]) => <Spot key={`${x}-${y}`} $x={x} $y={y}><WarningIcon kind={kind} /></Spot>)}
        </Canvas>
        <TaskbarRow />
      </Desktop>
    </>
  );
}
